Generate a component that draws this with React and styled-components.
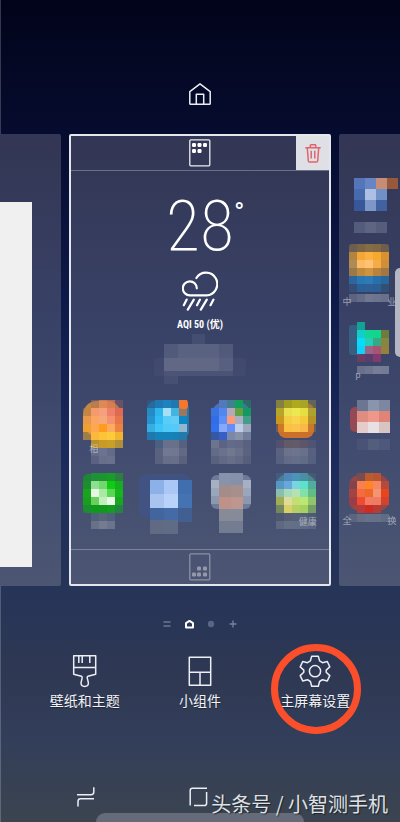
import styled, { createGlobalStyle } from 'styled-components';

// each tile is a list of pixel blocks: x / y start, block size, rows of colors
const apps = [
  {
    label: '相', labelX: 'left',
    soft: ['#f0a030', 10, 4, 38, 35, 14],
    blocks: [
      { x: 10, y: 3, size: 8, rows: [
        ['', '#b0706080', '#e5895ad0', '#e07a55c0', '#b0606060'],
        ['#c8805060', '#f59a68', '#f4a080', '#ec8068', '#dc6b50'],
        ['#e89848', '#fba565', '#f6a878', '#f59070', '#e67648'],
        ['#eea030', '#fba850', '#ff9c1c', '#fbab60', '#ea8440'],
        ['#e8a53090', '#fcb83c', '#fcc438', '#fccb3c', '#f2b430'],
        ['', '#b89030', '#c79b26', '#c99f2a', '#b0903a'],
      ] },
      { x: 18, y: 51, size: 8, rows: [['#646b88', '#6c7390', '#646b88'], ['#5a6282', '#686f8b', '#6a718c']] },
    ],
  },
  {
    label: '',
    soft: ['#1d86c0', 9, 4, 42, 38, 8],
    blocks: [
      { x: 9, y: 3, size: 8, rows: [
        ['#2a608f80', '#2079b2', '#1d82be', '#2078b0', '#ef7430'],
        ['#238cc4', '#2db5ec', '#a8dff8', '#42b4e2', '#9a7860'],
        ['#2593ce', '#30bcf4', '#58cdf8', '#65cdf5', '#0c88c4'],
        ['#36aee2', '#3ec4f6', '#50caf8', '#52cbf8', '#92b6ce'],
        ['#2078ac', '#1582ba', '#1582ba', '#1681b5', '#2279aa'],
      ] },
      { x: 17, y: 43, size: 8, rows: [['#4b6080', '#68708b', '#69708a', '#56617f'], ['#59627f', '#727891', '#71778f', '#616983'], ['#59617e', '#666e88', '#686f88', '#59617d']] },
    ],
    dot: true,
  },
  {
    label: '',
    soft: ['#4d82d6', 10, 5, 38, 36, 12],
    blocks: [
      { x: 9, y: 3, size: 8, rows: [
        ['', '#5478b8', '#408090', '#12a05c', '#24876880'],
        ['#3973e2', '#5188f0', '#b7a8b7', '#62a044', '#159763'],
        ['#326de8', '#5c8ff8', '#fc9b7a', '#aab0c4', '#459c87'],
        ['#3370ec', '#88a9fa', '#648ef4', '#c0cde8', '#9ea8bc'],
        ['#3558a2', '#355fc5', '#7a88aa', '#8792a8', '#717c9a'],
      ] },
      { x: 9, y: 43, size: 8, rows: [['#6d748e', '#5c6485', '#626b8a', '#626986', '#59617f'], ['#626b88', '#69718d', '#71778f', '#69708a', '#5b6381'], ['#59617e', '#616984', '#666e88', '#616984', '#555e7d']] },
    ],
  },
  {
    label: '',
    soft: ['#fa7c14', 11, 6, 36, 35, 8],
    blocks: [
      { x: 9, y: 3, size: 8, rows: [
        ['#857f42', '#a19c22', '#aeaa1e', '#a8a526', '#85844880'],
        ['#b5a52b', '#eadf4e', '#eee850', '#e5df44', '#aea12f'],
        ['#c9981d', '#f4cd45', '#f8d34c', '#f4ca3b', '#b59329'],
        ['#e0852050', '#fbc142', '#fbc34a', '#f9b84a', '#d08a3050'],
      ] },
      { x: 9, y: 43, size: 8, rows: [['#53506d', '#635a69', '#635b69', '#5d566a', '#4e5574'], ['#596380', '#6c728a', '#6e748d', '#697089', '#576080'], ['#566080', '#636b86', '#656e88', '#626b85', '#555f7e']] },
    ],
  },
  {
    label: '',
    soft: ['#129a20', 10, 4, 36, 39, 5],
    blocks: [
      { x: 10, y: 3, size: 8, rows: [
        ['', '#208f3a', '#1b962e', '#1a9c2c', '#2a803c'],
        ['#20923080', '#8de08d', '#72d76d', '#0ecb14', '#16ae20'],
        ['#18a41c', '#e6f6e3', '#a8e9a4', '#5ad653', '#15b51b'],
        ['#1a9e20', '#66d25a', '#c2f0bd', '#eafae8', '#18a522'],
        ['#17962a80', '#109a1d', '#10991c', '#149b22', '#258342'],
      ] },
      { x: 18, y: 43, size: 8, rows: [['#506078', '#57647c', '#515f7c'], ['#697189', '#757c92', '#6c748b']] },
    ],
  },
  {
    label: '',
    soft: ['#3f5488', 1, 4, 52, 44, 8],
    blocks: [
      { x: 12, y: 10, size: 14, rows: [
        ['#8cb0e8', '#aac7f5', '#416eaf'],
        ['#a9c4ef', '#b9d2fa', '#4572b1'],
        ['#41659c', '#446ba6', '#425f91'],
      ] },
      { x: 12, y: 50, size: 14, rows: [['#606a83', '#606b86']] },
    ],
  },
  {
    label: '',
    soft: ['#7e8aa8', 9, 5, 40, 34, 6],
    blocks: [
      { x: 17, y: 3, size: 12, rows: [['#8792ab', '#8591a9'], ['#a28d8a', '#a78f8c'], ['#bf9289', '#bd968f'], ['#878b97', '#858b99'], ['#747c90', '#737c92']] },
      { x: 9, y: 10, size: 8, rows: [['#a5b0c5'], ['#9aa6bc'], ['#8c98af']] },
      { x: 41, y: 10, size: 8, rows: [['#a5b0c5'], ['#9aa6bc'], ['#8c98af']] },
    ],
  },
  {
    label: '健康', labelX: 'right',
    soft: ['#59a9a4', 9, 4, 40, 39, 12],
    blocks: [
      { x: 9, y: 3, size: 8, rows: [
        ['#426a9280', '#4e87ba', '#4c93b8', '#498fa4', '#42717f60'],
        ['#5597c7', '#67a7dc', '#76d5df', '#5ee1cb', '#51ad9f'],
        ['#8abfae', '#a7dab9', '#b5e1b4', '#82e0a8', '#60be84'],
        ['#a2ab56', '#dddc9a', '#c1df72', '#b9e973', '#8fc56b'],
        ['#73885c', '#d8d16a', '#b6cf64', '#a5d163', '#749e67'],
      ] },
      { x: 9, y: 43, size: 8, rows: [['#4c5872', '#555e76', '#566178', '#556077', '#4d5975'], ['#5e6880', '#667085', '#646e86', '#606a82', '#5c6680']] },
    ],
  },
];

const sideApps = [
  {
    label: '',
    soft: ['#3f5e9f', 14, 2, 33, 32, 3],
    blocks: [
      { x: 14, y: 1, size: 11, rows: [
        ['#5475b8', '#6785c4', '#c58d76', '#98583c'],
        ['#476aaf', '#adc0e4', '#7090c8'],
        ['#37579a', '#7d98c8', '#41619f'],
      ] },
      { x: 14, y: 45, size: 11, rows: [['#545c7c', '#5e6583', '#555d7d']] },
    ],
  },
  {
    label: '中　　　　业',
    soft: ['#98743e', 9, -6, 40, 24, 4],
    blocks: [
      { x: 9, y: -6, size: 8, rows: [
        ['#5b575880', '#7a6547', '#846c45', '#836943', '#60565580'],
        ['#b38440', '#f3a738', '#fbb040', '#f7a830', '#d9922e'],
        ['#ad8a56', '#fbbb65', '#ffc173', '#f5ac48', '#cf8e38'],
        ['#9b784a', '#bf893e', '#d19340', '#ba833b', '#a37644'],
        ['#2d669c', '#2a77b6', '#2e7ab7', '#2870ac', '#29679b'],
        ['#2d669c60', '#2a6096', '#2e6097', '#2a6096', '#29679b60'],
      ] },
      { x: 9, y: 44, size: 8, rows: [['#5c6380', '#636b86', '#707790', '#6e748d', '#697089']] },
    ],
  },
  {
    label: 'p',
    labelX: 'left',
    soft: ['#35688b', 9, 2, 12, 30, 3],
    blocks: [
      { x: 17, y: -1, size: 8, rows: [
        ['#12a397', '', '', ''],
        ['#12cdc8', '#14d596', '#10d78d', '#6d7c3e'],
        ['#08dcfc', '#25cdb6', '#35a985', '#87863e'],
        ['#0ed2fb', '#9c6384', '#a65476', '#94813d'],
        ['#9a355980', '#703c6f80', '#833b6d', ''],
      ] },
      { x: 17, y: 43, size: 8, rows: [['#68708b', '#6e758f', '#777d96', '#737b95']] },
    ],
  },
  {
    label: '',
    soft: ['#b34a4c', 10, 11, 40, 25, 5],
    blocks: [
      { x: 17, y: 4, size: 11, rows: [
        ['#6b7792', '#8995ad', '#7d87a1'],
        ['#df8d83', '#ef978b', '#df8477'],
        ['#e5cbca', '#e8e1e3', '#d9c4c4'],
      ] },
      { x: 17, y: 43, size: 11, rows: [['#4a5375', '#535d7c', '#4e587a']] },
    ],
  },
  {
    label: '全　　　　换',
    soft: ['#b34434', 9, 6, 40, 36, 10],
    blocks: [
      { x: 9, y: 4, size: 8, rows: [
        ['', '#7a4c50', '#ba5c30', '#b75635', ''],
        ['#83434c', '#f77f50', '#ff852a', '#f98662', '#b34b3c'],
        ['#a54343', '#f56b41', '#ee6829', '#f39474', '#e8451c'],
        ['#9b3c47', '#ee4b32', '#f27c63', '#ee7b62', '#d2422c'],
        ['', '#b83b39', '#d02b20', '#b63d34', ''],
      ] },
      { x: 9, y: 45, size: 8, rows: [['#5d657e', '#666e86', '#68718a', '#667088', '#626b84']] },
    ],
  },
];

function AppTile({ app }) {
  const [color, x, y, w, h, r] = app.soft;
  return (
    <Tile type="button">
      <TileArt viewBox="0 0 60 46">
        <rect x={x} y={y} width={w} height={h} rx={r} fill={color} opacity="0.75" />
        {app.blocks.map((b, n) => b.rows.map((row, j) => row.map((fill, i) => fill && (
          <rect key={`${n}-${j}-${i}`} x={b.x + i * b.size} y={b.y + j * b.size} width={b.size} height={b.size} fill={fill} />
        ))))}
        {app.dot && <rect x="41" y="3" width="9" height="9" rx="3" fill="#f5762e" />}
      </TileArt>
      <TileLabel $align={app.labelX}>{app.label}</TileLabel>
    </Tile>
  );
}

const pageDots = [[4.5, 5.5], [10, 5.5], [15.5, 5.5], [4.5, 11.5], [10, 11.5]];
const dockDots = [[9.5, 15], [15.5, 15], [4.5, 21], [9.5, 21], [15.5, 21]];

function PageIcon({ dots, dim }) {
  return (
    <svg width="22" height="28" viewBox="0 0 22 28" opacity={dim ? 0.4 : 1}>
      <rect x="0.8" y="0.8" width="20" height="26" rx="1" fill="none" stroke="#eceef4" strokeWidth="1.3" />
      {dots.map(([x, y]) => (
        <rect key={`${x}-${y}`} x={x - 1.5} y={y - 1.5} width="4" height="4" rx="1.2" fill="#fff" />
      ))}
    </svg>
  );
}

function App() {
  return (
    <>
      <GlobalStyle />
      <Screen>
        <HomeToggle type="button" aria-label="主屏幕">
          <Line width="22" height="22" viewBox="0 0 22 22">
            <path d="M0.8 8.6 L11 0.9 L21.2 8.6 V20.4 Q21.2 21.2 20.4 21.2 H1.6 Q0.8 21.2 0.8 20.4 Z M7.3 21 V11.2 H14.7 V21" />
          </Line>
        </HomeToggle>

        <Pages>
          <SidePanel $feed>
            <FeedSheet />
          </SidePanel>
          <CurrentPanel>
            <PanelHead>
              <PageIcon dots={pageDots} />
              <DeleteButton type="button" aria-label="删除">
                <svg width="16" height="19" viewBox="0 0 16 19" fill="none" stroke="#e0646c" strokeWidth="1.5">
                  <path d="M0.3 3.8 H15.7 M5.3 3.6 V1.5 Q5.3 0.8 6 0.8 H10 Q10.7 0.8 10.7 1.5 V3.6 M2.3 4 L3.3 16.8 Q3.4 18 4.5 18 H11.5 Q12.6 18 12.7 16.8 L13.7 4 M6.2 6.8 V14.5 M9.8 6.8 V14.5" />
                </svg>
              </DeleteButton>
            </PanelHead>
            <Weather>
              <Temp>28<sup>°</sup></Temp>
              <svg width="36" height="40" viewBox="0 0 36 40" fill="none" stroke="#fff" strokeWidth="2.2" strokeLinecap="round">
                <path d="M14.8 17.3 A7 7 0 1 0 8 24.3 H24.5 A11.3 11.3 0 1 0 14.4 7" />
                <path d="M4.7 28.6 L1.8 34.2 M11.8 28.6 L5.8 38.6 M18 28.6 L15 34.2 M24.8 28.6 L18.8 38.6 M31.5 28.6 L28.5 34.2" />
              </svg>
              <Aqi>AQI 50 (优)</Aqi>
              <svg width="100" height="54" viewBox="0 0 100 54" fill="#fff">
                <rect x="42" y="1" width="13" height="10" opacity="0.06" />
                <rect x="14" y="11" width="69" height="27" opacity="0.12" />
                <rect x="28" y="11" width="41" height="14" opacity="0.05" />
                <rect x="14" y="25" width="55" height="13" opacity="0.06" />
                <rect x="4" y="25" width="92" height="18" rx="4" opacity="0.03" />
                <rect x="14" y="38" width="14" height="13" opacity="0.06" />
                <rect x="28" y="38" width="55" height="5" opacity="0.05" />
              </svg>
            </Weather>
            <AppGrid>
              {apps.map((app, i) => <AppTile key={i} app={app} />)}
            </AppGrid>
            <PanelFoot>
              <PageIcon dots={dockDots} dim />
            </PanelFoot>
          </CurrentPanel>
          <SidePanel>
            {sideApps.map((app, i) => <AppTile key={i} app={app} />)}
          </SidePanel>
          <EdgeHandle />
        </Pages>

        <Indicator>
          <svg width="12" height="12" viewBox="0 0 12 12" stroke="#6d7690" strokeWidth="1.3">
            <path d="M2.5 4 H9.5 M2.5 8 H9.5" />
          </svg>
          <svg width="12" height="12" viewBox="0 0 12 12" fill="none" stroke="#fff" strokeWidth="2" strokeLinejoin="round">
            <path d="M3 9.6 V5.2 L6.5 2.9 L10 5.2 V9.6 Z" />
          </svg>
          <svg width="12" height="12" viewBox="0 0 12 12">
            <circle cx="6" cy="6" r="3.2" fill="#5b6484" />
          </svg>
          <svg width="12" height="12" viewBox="0 0 12 12" stroke="#7a829a" strokeWidth="1.3">
            <path d="M2.6 6 H9.4 M6 2.6 V9.4" />
          </svg>
        </Indicator>

        <Actions>
          <Action type="button">
            <Line width="32" height="34" viewBox="-3 0 32 34">
              <path d="M1.7 1.7 H23.7 V20.3 L16 22.2 Q14.8 22.8 15.3 24.2 L16.4 28.8 Q16.6 32.3 12.7 32.4 Q8.8 32.3 9 28.8 L10.1 24.2 Q10.6 22.8 9.4 22.2 L1.7 20.3 Z M1.7 13.5 H23.7 M6.8 2 V9 M10.2 2 V9 M17.8 2 V9" />
            </Line>
            壁纸和主题
          </Action>
          <Action type="button">
            <Line width="32" height="34" viewBox="0 0 32 34">
              <path d="M5.3 3.2 H26.7 V31.2 H5.3 Z M5.3 18.2 H26.7 M16 18.2 V31.2" />
            </Line>
            小组件
          </Action>
          <Action type="button">
            <Line width="32" height="34" viewBox="0 0 32 34">
              <path d="M12.7 2.2 H19.3 L20.6 6.9 L23.5 8.7 L28.3 7.5 L30.8 12.9 L27.2 16.1 V18.3 L30.8 21.6 L28.3 26.9 L23.5 25.7 L20.6 27.5 L19.3 32.2 H12.7 L11.4 27.5 L8.5 25.7 L3.7 26.9 L1.2 21.6 L4.8 18.3 V16.1 L1.2 12.9 L3.7 7.5 L8.5 8.7 L11.4 6.9 Z" />
              <circle cx="16" cy="17.2" r="5.6" />
            </Line>
            主屏幕设置
            <Ring />
          </Action>
        </Actions>

        <NavBar>
          <NavButton type="button" aria-label="最近">
            <Line width="20" height="22" viewBox="0 0 20 22">
              <path d="M1 8.7 H15 Q17.8 8.7 17.8 6 V1.3 M18 12.8 H4.5 Q2 12.8 2 15.4 V20.6" />
            </Line>
          </NavButton>
          <NavButton type="button" aria-label="主页">
            <Line width="20" height="22" viewBox="0 0 20 22">
              <path d="M1.2 19.6 V4.5 Q1.2 2.3 3.4 2.3 H18 M5 19.6 H15.2 Q17.6 19.6 17.6 17.2 V6" />
            </Line>
          </NavButton>
        </NavBar>
        <BottomHandle />
        <Watermark>头条号 / 小智测手机</Watermark>
      </Screen>
    </>
  );
}

export default App

const GlobalStyle = createGlobalStyle`
  * {
    box-sizing: border-box;
  }
  body {
    margin: 0;
    background: #01031a;
  }
  button {
    padding: 0;
    border: 0;
    background: none;
    color: inherit;
    font: inherit;
  }
  svg {
    display: block;
    flex-shrink: 0;
  }
`;

const Screen = styled.div`
  position: relative;
  display: flex;
  flex-direction: column;
  min-height: 100vh;
  overflow: hidden;
  padding-top: 83px;
  box-shadow: inset 1px 0 rgba(255, 255, 255, 0.2);
  background: linear-gradient(
    #01031a 0%, #050824 8%, #060c30 17%, #0e1a4a 37%,
    #1b2a5c 55%, #263459 71%, #2e3853 82%, #333e5a 90%, #3b444f 100%
  );
  color: #f2f3f6;
  font-family: Roboto, "Noto Sans CJK SC", sans-serif;
`;

const Line = styled.svg`
  fill: none;
  stroke: #eceef4;
  stroke-width: 1.5;
  stroke-linejoin: round;
`;

const HomeToggle = styled.button`
  align-self: center;
`;

const Pages = styled.div`
  position: relative;
  display: grid;
  grid-template-columns: minmax(0, 61fr) minmax(0, 262fr) minmax(0, 61fr);
  gap: 8px;
  margin-top: 29px;
`;

const panelFill = 'linear-gradient(#333654, #394368 45%, #414c70 70%, #4c5673)';

const SidePanel = styled.div`
  display: flex;
  flex-direction: column;
  align-items: ${(props) => (props.$feed ? 'stretch' : 'center')};
  padding: ${(props) => (props.$feed ? '68px 29px 19px 0' : '43px 0 0')};
  overflow: hidden;
  border-radius: ${(props) => (props.$feed ? '0 2px 2px 0' : '2px 0 0 2px')};
  background: ${panelFill};
`;

const FeedSheet = styled.div`
  flex: 1;
  background: #f0f0f0;
`;

const CurrentPanel = styled.main`
  border: 2px solid #e4e6ee;
  border-radius: 2px;
  background: ${panelFill};
`;

const PanelHead = styled.div`
  position: relative;
  display: flex;
  justify-content: center;
  align-items: center;
  height: 35px;
  border-bottom: 1px solid #6b7089;
`;

const DeleteButton = styled.button`
  position: absolute;
  top: 0;
  right: 0;
  display: flex;
  justify-content: center;
  align-items: center;
  width: 33px;
  height: 34px;
  background: #dfe0e5;
`;

const Weather = styled.div`
  display: flex;
  flex-direction: column;
  align-items: center;
  padding-top: 20px;
  color: #fff;
`;

const Temp = styled.div`
  position: relative;
  margin-bottom: 10px;
  font-family: "Roboto Condensed", Roboto, sans-serif;
  font-size: 70px;
  font-weight: 200;
  line-height: 70px;

  sup {
    position: absolute;
    left: 100%;
    top: 0;
    font-size: 28px;
    font-weight: 400;
    line-height: 44px;
  }
`;

const Aqi = styled.div`
  margin: 8px 0 2px;
  font-family: "Roboto Condensed", Roboto, "Noto Sans CJK SC", sans-serif;
  font-size: 10px;
  font-weight: 700;
  line-height: 12px;
`;

const AppGrid = styled.div`
  display: grid;
  grid-template-columns: repeat(4, 1fr);
  justify-items: center;
  padding: 10px 0 6px;
`;

const Tile = styled.button`
  display: flex;
  flex-direction: column;
  align-items: center;
  width: 60px;
  height: 73px;
  flex-shrink: 0;
`;

const TileArt = styled.svg`
  width: 60px;
  height: 46px;
  overflow: visible;
`;

const TileLabel = styled.span`
  position: relative;
  width: 60px;
  padding: ${(props) => (props.$align === 'left' ? '0 16px' : props.$align === 'right' ? '0 10px' : '0 3px')};
  color: rgba(232, 235, 242, 0.55);
  font-size: 9px;
  line-height: 12px;
  text-align: ${(props) => props.$align || 'center'};
  white-space: nowrap;
`;

const PanelFoot = styled.div`
  display: flex;
  justify-content: center;
  align-items: center;
  height: 35px;
  border-top: 1px solid #7b839b;
`;

// lies over the right page
const EdgeHandle = styled.div`
  position: absolute;
  top: 134px;
  right: 0;
  width: 5px;
  height: 89px;
  border-radius: 5px 0 0 5px;
  background: #b4b7c3;
`;

const Indicator = styled.div`
  display: flex;
  justify-content: center;
  gap: 10px;
  margin-top: 32px;
`;

const Actions = styled.div`
  display: grid;
  grid-template-columns: repeat(3, 1fr);
  justify-items: center;
  padding: 0 27px;
  margin-top: 24px;
`;

const Action = styled.button`
  position: relative;
  display: flex;
  flex-direction: column;
  align-items: center;
  gap: 2px;
  font-family: "Noto Sans CJK SC", sans-serif;
  font-size: 14px;
  line-height: 20px;
  text-shadow: 0 1px 1px rgba(0, 0, 0, 0.4);
`;

const Ring = styled.span`
  position: absolute;
  left: 50%;
  top: -10px;
  width: 90px;
  height: 90px;
  margin-left: -44px;
  border: 7px solid #fb4f2b;
  border-radius: 50%;
`;

const NavBar = styled.nav`
  display: grid;
  grid-template-columns: repeat(3, 1fr);
  justify-items: center;
  padding: 0 31px 0 29px;
  margin-top: auto;
  margin-bottom: 14px;
`;

const NavButton = styled.button`
  display: block;
`;

const BottomHandle = styled.div`
  position: absolute;
  left: 24%;
  right: 24%;
  bottom: 0;
  height: 9px;
  border-radius: 12px 12px 0 0;
  background: #656b78;
`;

const Watermark = styled.div`
  position: absolute;
  right: 12px;
  bottom: 4px;
  color: #dfe1e6;
  font-family: "Noto Sans CJK SC", sans-serif;
  font-size: 20px;
  line-height: 28px;
  text-shadow: 1px 1px 1px rgba(0, 0, 0, 0.5);
`;
